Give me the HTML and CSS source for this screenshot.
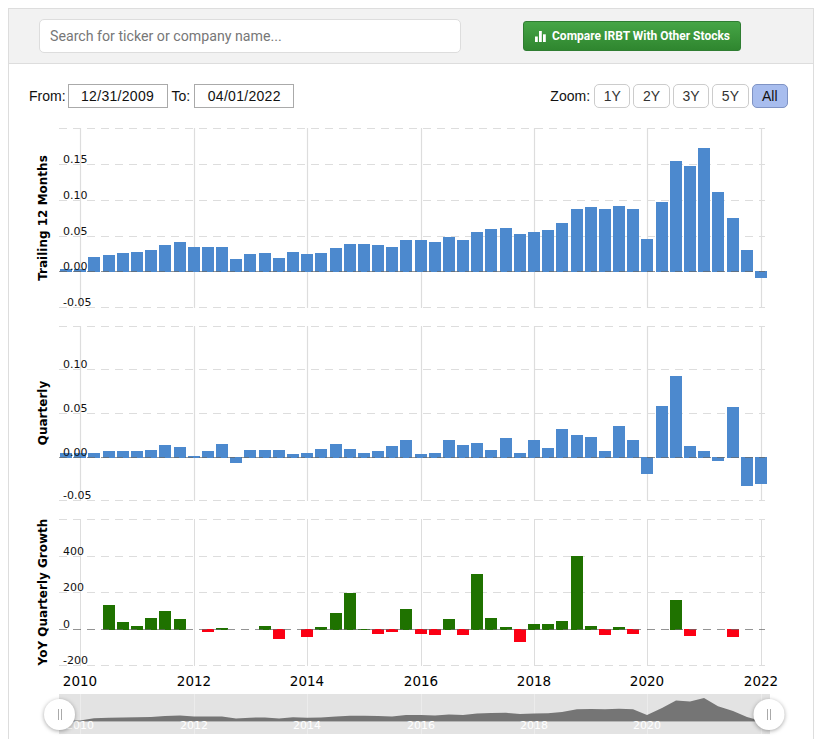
FILE: index.html
```html
<!DOCTYPE html>
<html lang="en">
<head>
    <meta charset="UTF-8">
    <meta name="viewport" content="width=device-width, initial-scale=1.0">
    <title>IRBT EPS</title>
    <link rel="stylesheet" href="styles.css">
</head>
<body>
    <div class="panel">
        <div class="search-bar">
            <input class="search-input" type="text" placeholder="Search for ticker or company name...">
            <a class="compare-btn" href="#">
                <svg class="compare-icon" width="11" height="11" viewBox="0 0 11 11">
                    <rect x="0" y="5.5" width="2.8" height="5.5"></rect>
                    <rect x="4" y="0" width="2.8" height="11"></rect>
                    <rect x="8" y="3.3" width="2.8" height="7.7"></rect>
                </svg>
                Compare IRBT With Other Stocks
            </a>
        </div>

        <div class="controls">
            <div class="date-range">
                <span class="from-label">From:</span>
                <span class="date-box">12/31/2009</span>
                <span class="to-label">To:</span>
                <span class="date-box">04/01/2022</span>
            </div>
            <div class="zoom-group">
                <span class="zoom-label">Zoom:</span>
                <button class="zoom-btn">1Y</button>
                <button class="zoom-btn">2Y</button>
                <button class="zoom-btn">3Y</button>
                <button class="zoom-btn">5Y</button>
                <button class="zoom-btn active">All</button>
            </div>
        </div>

        <!-- viewBox starts at the svg's page offset so the numbers below read as page pixels -->
        <svg class="chart" id="chart" width="804" height="619" viewBox="9 120 804 619">
            <g id="grid"></g>
            <g id="bars"></g>

            <g class="tick">
                <text x="63" y="163">0.15</text>
                <text x="63" y="199">0.10</text>
                <text x="63" y="235">0.05</text>
                <text x="63" y="270">0.00</text>
                <text x="63" y="306">-0.05</text>

                <text x="63" y="368">0.10</text>
                <text x="63" y="412">0.05</text>
                <text x="63" y="456">0.00</text>
                <text x="63" y="499">-0.05</text>

                <text x="63" y="555">400</text>
                <text x="63" y="591">200</text>
                <text x="63" y="628">0</text>
                <text x="63" y="664">-200</text>
            </g>

            <g class="axis-title">
                <text transform="translate(47 218) rotate(-90)">Trailing 12 Months</text>
                <text transform="translate(47 413) rotate(-90)">Quarterly</text>
                <text transform="translate(47 592) rotate(-90)">YoY Quarterly Growth</text>
            </g>

            <g class="year">
                <text x="80" y="686">2010</text>
                <text x="194" y="686">2012</text>
                <text x="307" y="686">2014</text>
                <text x="421" y="686">2016</text>
                <text x="534" y="686">2018</text>
                <text x="647" y="686">2020</text>
                <text x="761" y="686">2022</text>
            </g>

            <!-- range navigator -->
            <rect class="nav-bg" x="59" y="694" width="711" height="40"></rect>
            <g id="navLines"></g>
            <polygon class="nav-area" id="navArea"></polygon>
            <line class="nav-base" x1="59" y1="721.5" x2="770" y2="721.5"></line>
            <g class="nav-year">
                <text x="80" y="729">2010</text>
                <text x="194" y="729">2012</text>
                <text x="307" y="729">2014</text>
                <text x="421" y="729">2016</text>
                <text x="534" y="729">2018</text>
                <text x="647" y="729">2020</text>
            </g>
            <g class="nav-handle">
                <circle cx="59.5" cy="714.5" r="15.5"></circle>
                <path d="M58.5 709v11M61.5 709v11"></path>
            </g>
            <g class="nav-handle">
                <circle cx="769" cy="714.5" r="15.5"></circle>
                <path d="M767.5 709v11M770.5 709v11"></path>
            </g>
        </svg>
    </div>

    <script src="chart.js"></script>
</body>
</html>
```

FILE: styles.css
```css
html, body {
    overflow: hidden;
}

body {
    margin: 8px 0 0 8px;
    font-family: "Liberation Sans", Arial, sans-serif;
    color: #111;
}

.panel {
    width: 804px;
    border: 1px solid #ddd;
    border-bottom: none;
}

.search-bar {
    display: flex;
    align-items: center;
    height: 54px;
    padding-left: 30px;
    background-color: #f2f2f2;
    border-bottom: 1px solid #ddd;
}

.search-input {
    box-sizing: border-box;
    width: 422px;
    height: 34px;
    padding: 0 10px;
    border: 1px solid #ddd;
    border-radius: 5px;
    background-color: #fff;
    font-family: Roboto, sans-serif;
    font-size: 14.2px;
}

.search-input::placeholder {
    color: #777;
    opacity: 1;
}

.compare-btn {
    box-sizing: border-box;
    display: flex;
    align-items: center;
    gap: 6px;
    width: 218px;
    height: 30px;
    margin-left: 62px;
    padding-left: 11px;
    border: 1px solid #2f7d32;
    border-radius: 3px;
    background: linear-gradient(#46a546, #2f862f);
    color: #fff;
    font-family: Roboto, sans-serif;
    font-size: 12px;
    font-weight: 700;
    text-decoration: none;
}

.compare-icon {
    fill: #fff;
}

.controls {
    display: flex;
    justify-content: space-between;
    align-items: center;
    height: 24px;
    padding: 20px 25px 12px 20px;
    font-size: 14px;
}

.date-range {
    display: flex;
    align-items: center;
}

.from-label {
    margin-right: 2px;
}

.to-label {
    margin: 0 4px;
}

.date-box {
    box-sizing: border-box;
    width: 100px;
    height: 24px;
    border: 1px solid #aaa;
    letter-spacing: 0.3px;
    line-height: 22px;
    text-align: center;
}

.zoom-group {
    display: flex;
    align-items: center;
    gap: 3px;
}

.zoom-label {
    margin-right: 1px;
}

.zoom-btn {
    box-sizing: border-box;
    width: 36.4px;
    height: 24px;
    padding: 0;
    border: 1px solid #ccc;
    border-radius: 5px;
    background-color: #fff;
    color: #333;
    font-family: inherit;
    font-size: 14px;
}

.zoom-btn.active {
    background-color: #a8bdee;
    border-color: #7f93c4;
    color: #111;
}

.chart {
    display: block;
}

.grid-h {
    stroke: #ddd;
    stroke-dasharray: 8 6;
}

.grid-v {
    stroke: #ddd;
}

.wide {
    stroke-width: 1.2;
}

.zero-line {
    stroke: #666;
    stroke-opacity: 0.7;
    stroke-dasharray: 8 6;
}

.bar-blue {
    fill: #4c89ce;
}

.bar-green {
    fill: #1f7200;
}

.bar-red {
    fill: #fb0014;
}

.tick text {
    font-family: "DejaVu Sans", Verdana, sans-serif;
    font-size: 11px;
    fill: #111;
}

.axis-title text {
    font-family: "DejaVu Sans", Verdana, sans-serif;
    font-size: 12px;
    font-weight: 700;
    text-anchor: middle;
    fill: #000;
}

.year text {
    font-family: "DejaVu Sans", Verdana, sans-serif;
    font-size: 13.5px;
    text-anchor: middle;
    fill: #000;
}

.nav-bg {
    fill: #e3e3e3;
}

.nav-grid {
    stroke: #ececec;
}

.nav-area {
    fill: #757575;
}

.nav-base {
    stroke: #b5b5b5;
}

.nav-year text {
    font-family: "DejaVu Sans", Verdana, sans-serif;
    font-size: 11px;
    text-anchor: middle;
    fill: #fff;
}

.nav-handle circle {
    fill: #fff;
    filter: drop-shadow(0 1px 2px rgba(0, 0, 0, 0.35));
}

.nav-handle path {
    stroke: #aaa;
    fill: none;
}
```

FILE: chart.js
```js
// Bar left edges, same for all three panels
const barX = [
    60, 74, 88, 103, 117, 131, 145, 159, 174, 188, 202, 216, 230, 244, 259, 273, 287,
    301, 315, 330, 344, 358, 372, 386, 400, 415, 429, 443, 457, 471, 485, 500, 514,
    528, 542, 556, 571, 585, 599, 613, 627, 641, 656, 670, 684, 698, 712, 727, 741, 755
];
const barWidth = 12;

// Heights in px above (or below, when negative) the zero line
const trailing = [
    3, 3, 15, 17, 19, 20, 22, 27, 30, 25, 25, 25, 13, 18, 19, 14, 20,
    18, 19, 24, 28, 28, 27, 25, 32, 32, 30, 35, 32, 40, 43, 44, 38,
    40, 42, 49, 63, 65, 63, 66, 63, 33, 70, 111, 106, 124, 80, 54, 22, -7
];
const quarterly = [
    5, 5, 5, 7, 7, 7, 8, 13, 11, 2, 7, 14, -6, 8, 8, 8, 4,
    5, 9, 14, 9, 5, 7, 12, 18, 4, 5, 18, 13, 15, 8, 20, 5,
    18, 10, 29, 23, 21, 7, 32, 18, -17, 52, 82, 12, 7, -4, 51, -29, -27
];
const yoy = [
    0, 0, 0, 25, 8, 4, 12, 19, 11, 0, -3, 2, 0, 0, 4, -10, 0,
    -8, 3, 17, 37, 1, -5, -3, 21, -5, -6, 11, -6, 56, 12, 3, -13,
    6, 6, 9, 74, 4, -6, 3, -5, 0, 0, 30, -7, 0, 0, -8, 0, 0
];

const panels = [
    { base: 272, grid: [128, 164, 200, 236, 307], zero: 271, data: trailing, pos: "bar-blue", neg: "bar-blue", lines: "wide" },
    { base: 458, grid: [326, 369, 413, 500], zero: 457, data: quarterly, pos: "bar-blue", neg: "bar-blue", lines: "wide" },
    { base: 630, grid: [519, 556, 592, 665], zero: 629, data: yoy, pos: "bar-green", neg: "bar-red", lines: "" }
];

const yearX = [80, 194, 307, 421, 534, 647, 761];
const svgNS = "http://www.w3.org/2000/svg";

const addShape = (parent, tag, className, attrs) => {
    const el = document.createElementNS(svgNS, tag);
    el.setAttribute("class", className);
    Object.keys(attrs).forEach(key => el.setAttribute(key, attrs[key]));
    parent.appendChild(el);
};

const hLine = (parent, className, y) => {
    addShape(parent, "line", className, { x1: 59, x2: 765, y1: y + 0.5, y2: y + 0.5 });
};

const gridGroup = document.getElementById("grid");
const barsGroup = document.getElementById("bars");

panels.forEach(panel => {
    const top = panel.grid[0];
    const bottom = panel.grid[panel.grid.length - 1];

    yearX.forEach(x => {
        addShape(gridGroup, "line", `grid-v ${panel.lines}`, { x1: x + 0.5, x2: x + 0.5, y1: top, y2: bottom + 1 });
    });
    panel.grid.forEach(y => hLine(gridGroup, `grid-h ${panel.lines}`, y));

    panel.data.forEach((h, i) => {
        if (h === 0) return;
        addShape(barsGroup, "rect", h > 0 ? panel.pos : panel.neg, {
            x: barX[i],
            y: h > 0 ? panel.base - h : panel.zero,
            width: barWidth,
            height: Math.abs(h)
        });
    });

    // zero line sits on top of the bars
    hLine(barsGroup, "zero-line", panel.zero);
});

// Navigator: faint year lines and the trailing series squashed into a small area
const navLines = document.getElementById("navLines");
yearX.forEach(x => {
    addShape(navLines, "line", "nav-grid", { x1: x + 0.5, x2: x + 0.5, y1: 694, y2: 734 });
});

const navBase = 721;
const navPoints = trailing.map((h, i) => `${barX[i] + 6},${navBase - Math.max(h, 0) * 0.185}`);
navPoints.unshift(`60,${navBase}`);
navPoints.push(`761,${navBase}`);
document.getElementById("navArea").setAttribute("points", navPoints.join(" "));
```
